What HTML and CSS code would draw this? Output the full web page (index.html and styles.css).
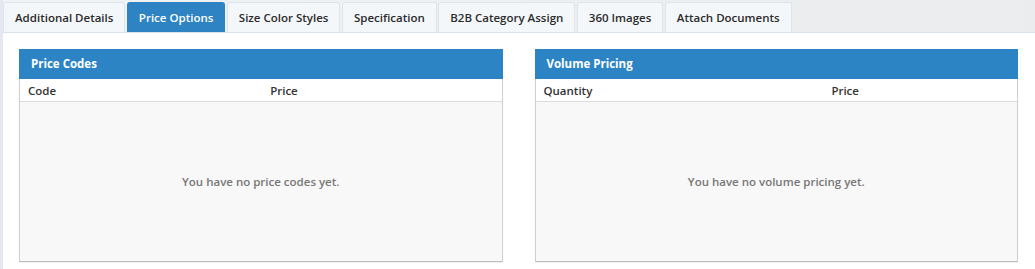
FILE: index.html
```html
<!DOCTYPE html>
<html lang="en">
<head>
    <meta charset="UTF-8">
    <meta name="viewport" content="width=device-width, initial-scale=1.0">
    <title>Price Options</title>
    <link rel="stylesheet" href="styles.css">
</head>
<body>
    <div class="page">
        <ul class="tabs">
            <li class="tab">Additional Details</li>
            <li class="tab active">Price Options</li>
            <li class="tab">Size Color Styles</li>
            <li class="tab">Specification</li>
            <li class="tab">B2B Category Assign</li>
            <li class="tab">360 Images</li>
            <li class="tab">Attach Documents</li>
        </ul>

        <div class="tab-content">
            <div class="panel">
                <div class="panel-heading">Price Codes</div>
                <table class="panel-table">
                    <thead>
                        <tr><th>Code</th><th>Price</th></tr>
                    </thead>
                </table>
                <div class="panel-empty">You have no price codes yet.</div>
            </div>

            <div class="panel">
                <div class="panel-heading">Volume Pricing</div>
                <table class="panel-table">
                    <thead>
                        <tr><th>Quantity</th><th>Price</th></tr>
                    </thead>
                </table>
                <div class="panel-empty">You have no volume pricing yet.</div>
            </div>
        </div>
    </div>
</body>
</html>
```

FILE: styles.css
```css
body {
    margin: 0;
    padding: 0;
    font-family: "Open Sans", Arial, sans-serif;
    font-size: 11.5px;
    color: #333;
    background: #fff;
}

.page {
    border-left: 3px solid #e3e8f1;
    min-height: 269px;
    box-sizing: border-box;
}

.tabs {
    list-style: none;
    margin: 0;
    padding: 2px 0 0 0;
    display: flex;
    gap: 1.5px;
    background: linear-gradient(90deg, #f1f2f4, #ebecee);
    border-bottom: 1px solid #d4e1ee;
}

.tab {
    padding: 0 11px;
    height: 29px;
    line-height: 29px;
    font-weight: 600;
    color: #2b2b2b;
    background: #f4f7fa;
    border: 1px solid #dde4ec;
    border-bottom: none;
    border-radius: 3px 3px 0 0;
    white-space: nowrap;
}

.tab.active {
    background: #2e83c3;
    border-color: #2e83c3;
    color: #fff;
}

.tab-content {
    display: grid;
    grid-template-columns: 1fr 1fr;
    gap: 32px;
    padding: 16px 17px 7px 16px;
}

.panel {
    border: 1px solid #cfcfcf;
    border-bottom-color: #bdbdbd;
    border-top: none;
    background: #f8f8f8;
    box-shadow: 0 1px 1px rgba(0, 0, 0, 0.05);
}

.panel-heading {
    background: #2d84c4;
    color: #fff;
    font-weight: 700;
    height: 30px;
    line-height: 30px;
    padding: 0 12px;
    margin: 0 -1px;
}

.panel-table {
    width: 100%;
    border-collapse: collapse;
    background: #fff;
}

.panel-table th {
    text-align: left;
    font-weight: 600;
    height: 22px;
    padding: 0 8px;
    border-bottom: 1px solid #dcdcdc;
}

.panel-empty {
    height: 159px;
    display: flex;
    align-items: center;
    justify-content: center;
    font-weight: 600;
    color: #777;
}
```
